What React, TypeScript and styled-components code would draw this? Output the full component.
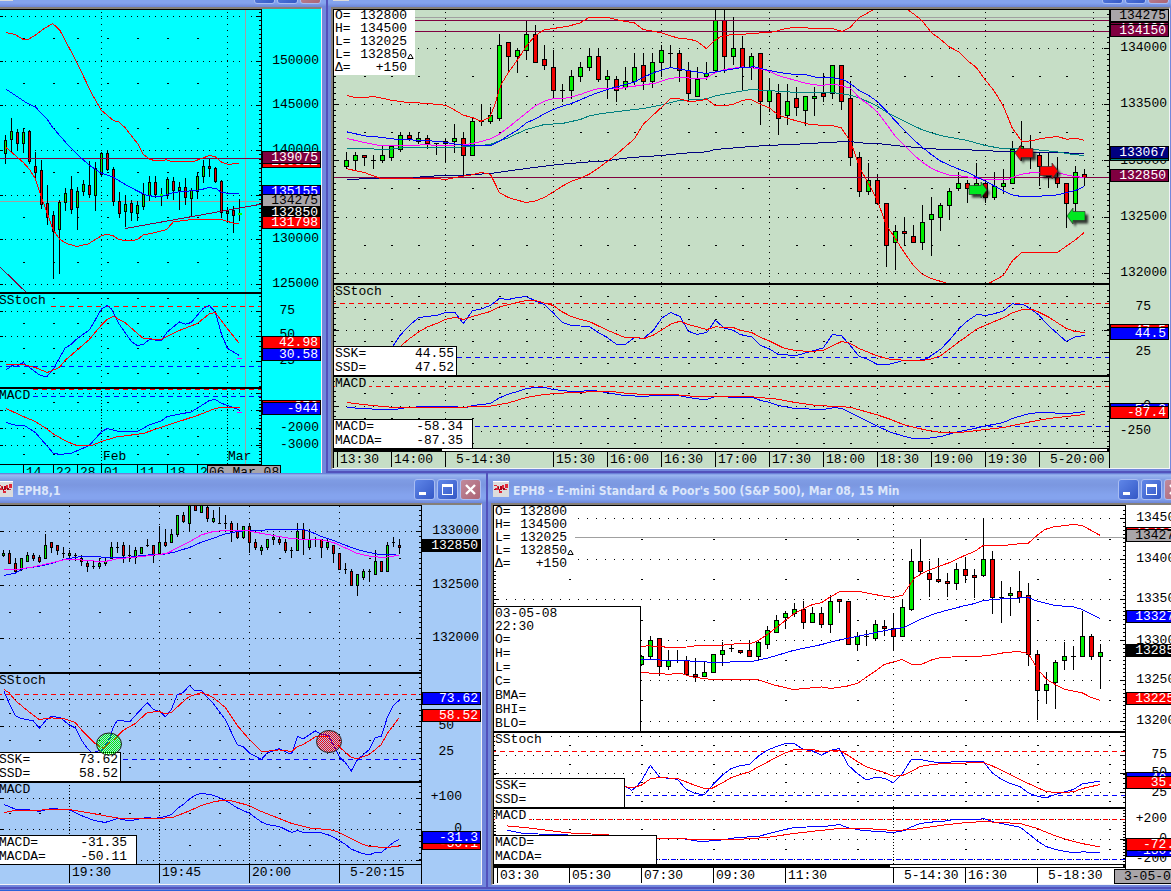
import React from "react";
import styled, { createGlobalStyle } from "styled-components";

/* ---------- page ---------- */

const GlobalStyle = createGlobalStyle`
  * { box-sizing: border-box; }
  html, body { margin: 0; padding: 0; background: #7b8fe0; }
  body { overflow: hidden; }
`;

const MONO = `"Liberation Mono", "DejaVu Sans Mono", monospace`;

const Desktop = styled.main`
  overflow: hidden;
  background: #7b8fe0;
  font: 13px/14px ${MONO};
  color: #000;
`;

const WindowRow = styled.div<{ $lower?: boolean }>`
  display: flex;
  align-items: flex-start;
  position: relative;
  margin-top: ${(p) => (p.$lower ? "-16px" : "-23px")};
`;

const Taskbar = styled.footer`
  height: 2px;
  background: #2a62d8;
`;

/* ---------- window chrome ---------- */

const Frame = styled.section<{ $width?: number; $overhang?: number }>`
  flex: ${(p) => (p.$width ? `0 0 ${p.$width}px` : "1 1 0")};
  min-width: 0;
  margin-left: ${(p) => (p.$width ? "-9px" : "0")};
  margin-right: ${(p) => (p.$overhang ? `-${p.$overhang}px` : "0")};
  padding: 0 5px 5px 4px;
  background: #7186dc;
  box-shadow: inset 0 -1px 0 #6a80da, inset 0 -3px 0 #5252bc, inset 1px 0 0 #5252bc, inset -1px 0 0 #5252bc;
`;

const TitleBar = styled.header`
  display: flex;
  align-items: flex-start;
  gap: 2px;
  height: 30px;
  margin: 0 -4px 0 -3px;
  padding: 6px 5px 0 5px;
  background: linear-gradient(#5b6fd0 0, #9bb8f0 2px, #7f9ce4 7px, #7b97e0 12px, #84a3ee 22px, #84a3ee 26px, #6d86d8 30px);
`;

const TitleText = styled.h2`
  flex: 1;
  min-width: 0;
  margin: 0;
  padding-left: 2px;
  font: bold 12px/24px "DejaVu Sans Condensed", "Open Sans", sans-serif;
  font-stretch: condensed;
  color: #dce6fa;
  white-space: nowrap;
  overflow: hidden;
`;

const ChromeButton = styled.button<{ $close?: boolean }>`
  flex: none;
  width: 21px;
  height: 21px;
  padding: 0;
  border: 1px solid #a9bdf2;
  border-radius: 3px;
  background: ${(p) => (p.$close ? "linear-gradient(135deg, #c08a9c, #ac6474)" : "linear-gradient(135deg, #5f86e8, #3458c6)")};

  svg { display: block; }
`;

const Body = styled.div<{ $tone: string }>`
  position: relative;
  display: flex;
  background: ${(p) => p.$tone};
  border-top: 2px solid #857f78;
  border-left: 2px solid #857f78;
  border-right: 1px solid #f4f4f8;
  border-bottom: 1px solid #f4f4f8;
`;

const Plot = styled.div`
  flex: 1;
  min-width: 0;
  border: solid #000;
  border-width: 1px 1px 0 1px;
`;

const Scale = styled.ol`
  position: relative;
  flex: 0 0 59px;
  margin: 0;
  padding: 0;
  list-style: none;
`;

const ScaleLabel = styled.li<{ $y: number; $inset: number }>`
  position: absolute;
  top: ${(p) => p.$y}px;
  right: ${(p) => p.$inset}px;
  line-height: 13px;
  white-space: nowrap;
`;

const ScaleTag = styled.li<{ $y: number; $tone: string; $ink: string }>`
  position: absolute;
  top: ${(p) => p.$y}px;
  left: 0;
  right: 0;
  height: 13px;
  padding-right: 2px;
  border: 1px solid #000;
  background: ${(p) => p.$tone};
  color: ${(p) => p.$ink};
  line-height: 12px;
  text-align: right;
  overflow: hidden;
`;

/* ---------- panes ---------- */

const PaneBox = styled.div<{ $height: number; $rule: number }>`
  position: relative;
  height: ${(p) => p.$height + p.$rule}px;
  border-bottom: ${(p) => p.$rule}px solid #000;
`;

const PaneSvg = styled.svg`
  display: block;
  width: 100%;
  height: 100%;
`;

const PaneName = styled.h3<{ $tone: string }>`
  position: absolute;
  top: 0;
  left: 1px;
  margin: 0;
  padding-right: 3px;
  background: ${(p) => p.$tone};
  font: inherit;
`;

const Readout = styled.dl<{ $width: number }>`
  position: absolute;
  left: 0;
  bottom: 0;
  width: ${(p) => p.$width}px;
  margin: 0;
  border: solid #000;
  border-width: 1px 1px 0 0;
  background: #fff;
`;

const ReadoutRow = styled.div<{ $inset?: number }>`
  display: flex;
  justify-content: space-between;
  height: 14px;
  padding: 0 ${(p) => p.$inset ?? 2}px 0 1px;

  dd { margin: 0; }
`;

const Stamp = styled.div`
  height: 13px;
  padding-left: 1px;
  line-height: 13px;
`;

const Quote = styled.dl`
  position: absolute;
  top: 0;
  left: 0;
  width: 81px;
  margin: 0;
  padding-left: 1px;
  background: #fff;
  line-height: 12px;
`;

const QuoteRow = styled.div`
  display: flex;
  height: 13px;

  dt { width: 24px; }
  dd { margin: 0; width: 48px; text-align: right; }
  svg { margin-top: 4px; }
`;

const MonthName = styled.span<{ $x: number }>`
  position: absolute;
  left: ${(p) => p.$x}px;
  bottom: 0;
`;

const ScrollTrack = styled.div<{ $start: number }>`
  height: 3px;
  padding: 0 2px 1px ${(p) => p.$start}px;
  background: #000;

  &::after { content: ""; display: block; height: 2px; background: #fff; }
`;

const TimeScale = styled.ol<{ $height: number; $lead: number }>`
  display: flex;
  height: ${(p) => p.$height}px;
  margin: 0;
  padding: 0 0 1px ${(p) => p.$lead}px;
  overflow: hidden;
  list-style: none;
  line-height: 15px;
`;

const TimeSlot = styled.li<{ $width: number; $day?: boolean }>`
  flex: 0 0 ${(p) => p.$width}px;
  padding-left: ${(p) => (p.$day ? 10 : 2)}px;
  border-left: 1px solid #000;
  white-space: nowrap;
`;

const DateTag = styled.div<{ $right: number; $width: number; $height: number; $pad: number }>`
  position: absolute;
  right: ${(p) => p.$right}px;
  bottom: 0;
  width: ${(p) => p.$width}px;
  height: ${(p) => p.$height}px;
  padding-left: ${(p) => p.$pad}px;
  border: 1px solid #000;
  background: #a9a5a9;
  white-space: nowrap;
  overflow: hidden;
`;

/* ---------- chart drawing: data is in thirds of a pixel ---------- */

type Segment = [number, string];
const px = (v: number) => Math.floor(v / 3);

const toPoints = (segments: Segment[]) =>
  segments
    .flatMap(([dx, s]) => s.trim().split(/\s+/).map((p) => p.split(",").map(Number)).map(([x, y]) => `${((x + dx) / 3).toFixed(1)},${(y / 3 + 0.2).toFixed(1)}`))
    .join(" ");

const Curve = ({ c, d }: { c: string; d: Segment[] | string }) => (
  <polyline points={toPoints(typeof d === "string" ? [[0, d]] : d)} fill="none" stroke={c} strokeWidth={1} />
);

const HLine = ({ y, c, dash, from = -90 }: { y: number; c: string; dash?: boolean; from?: number }) => (
  <line x1={px(from)} x2={4000} y1={px(y) + 0.5} y2={px(y) + 0.5} stroke={c} strokeDasharray={dash ? "5 4" : undefined} />
);

interface CandleProps { data: string; x: number; step: number; wide?: boolean }

const Candles = ({ data, x, step, wide }: CandleProps) => (
  <>
    {data.trim().split(/\s*;\s*/).filter(Boolean).map((row, i) => {
      const [hs, ts, bs, ls, kind] = row.trim().split(/[ ,]+/);
      const [h, t, b, l] = [hs, ts, bs, ls].map((v) => px(Number(v)));
      const cx = px(x + step * i);
      const r = wide ? 2 : 1;
      return (
        <g key={i}>
          <rect x={cx} y={h} width={1} height={Math.max(1, l - h)} fill="#000" />
          <rect x={cx - r} y={t} width={2 * r + 1} height={Math.max(1, b - t + 1)} fill="#000" />
          {kind !== "d" && b - t > 0 && (
            <rect x={cx - r + 1} y={t + 1} width={2 * r - 1} height={Math.max(1, b - t - 1)} fill={kind === "g" ? "#00f000" : "#f00000"} />
          )}
        </g>
      );
    })}
  </>
);

interface GridProps { rows: number[]; dashes: number[]; x: number; step: number; dashX: number[]; cols: number[]; vstep?: number; until: number }

const Grid = ({ rows, dashes, x, step, dashX, cols, vstep = 6, until }: GridProps) => (
  <g stroke="#000">
    {rows.map((y) => <line key={y} x1={px(x)} x2={px(until)} y1={px(y) + 0.5} y2={px(y) + 0.5} strokeDasharray={`1 ${step - 1}`} />)}
    {dashes.flatMap((y) => dashX.map((dx) => <line key={`${y}-${dx}`} x1={px(dx)} x2={px(dx) + 2} y1={px(y) + 0.5} y2={px(y) + 0.5} />))}
    {cols.map((cx) => <line key={cx} x1={px(cx) + 0.5} x2={px(cx) + 0.5} y1={0} y2={900} strokeDasharray={`1 ${vstep - 1}`} />)}
  </g>
);

interface PaneProps {
  height: number; rule?: number; x: number; y: number; tick: number; grid: GridProps;
  name?: string; tone?: string; overlay?: React.ReactNode; children?: React.ReactNode;
}

const Pane = ({ height, rule = 2, x, y, tick, grid, name, tone = "transparent", overlay, children }: PaneProps) => {
  const first = (px(grid.rows[0]) + y) % tick;
  const ticks = `1 ${tick - 1}`;
  return (
    <PaneBox $height={height} $rule={rule}>
      <PaneSvg shapeRendering="crispEdges" aria-hidden="true">
        <g stroke="#000" strokeWidth={4}>
          <line x1="0" x2="0" y1={first} y2={height} strokeDasharray={ticks} />
          <line x1="100%" x2="100%" y1={first} y2={height} strokeDasharray={ticks} />
          {grid.rows.map((r) => (
            <React.Fragment key={r}>
              <line strokeWidth={1} x1="0" x2="5" y1={px(r) + y + 0.5} y2={px(r) + y + 0.5} />
              <line strokeWidth={10} x1="100%" x2="100%" y1={px(r) + y} y2={px(r) + y + 1} />
            </React.Fragment>
          ))}
        </g>
        <g transform={`translate(${x} ${y})`}>
          <Grid {...grid} />
          {children}
        </g>
      </PaneSvg>
      {name && <PaneName $tone={tone}>{name}</PaneName>}
      {overlay}
    </PaneBox>
  );
};

/* ---------- small parts ---------- */

const IconSvg = styled.svg`
  flex: none;
  margin-top: 2px;
`;

const AppIcon = () => (
  <IconSvg width="16" height="16" viewBox="0 0 16 16" aria-hidden="true" shapeRendering="crispEdges">
    <rect width="16" height="16" fill="#dcdcdc" />
    <rect width="16" height="1" fill="#fff" />
    <path d="M1 4h3v1H1zM2 7h2v2H2zM4 5h2v4H4zM12 3h3v4h-3zM12 8h2v1h-2zM9 4h2v4H9zM6 10h3v2H6z" fill="#e02838" />
    <path d="M7 5h2v4H7zM6 8h1v2H6zM1 8h2v1H1zM11 7h1v2h-1z" fill="#b00018" />
    <path d="M5 6h1v2H5zM10 7h1v2h-1z" fill="#701018" />
  </IconSvg>
);

const ChromeButtons = () => (
  <>
    <ChromeButton type="button" aria-label="Minimize">
      <svg width="19" height="19" viewBox="0 0 19 19"><rect x="4" y="12" width="7" height="3" fill="#fff" /></svg>
    </ChromeButton>
    <ChromeButton type="button" aria-label="Maximize">
      <svg width="19" height="19" viewBox="0 0 19 19"><path d="M4 4h11v11H4zM5 7v7h9V7z" fill="#fff" fillRule="evenodd" /></svg>
    </ChromeButton>
    <ChromeButton type="button" aria-label="Close" $close>
      <svg width="19" height="19" viewBox="0 0 19 19"><path d="M5 5l9 9M14 5l-9 9" stroke="#fff" strokeWidth="2.4" /></svg>
    </ChromeButton>
  </>
);

const QuoteBoard = () => (
  <Quote>
    <QuoteRow><dt>O=</dt><dd>132800</dd></QuoteRow>
    <QuoteRow><dt>H=</dt><dd>134500</dd></QuoteRow>
    <QuoteRow><dt>L=</dt><dd>132025</dd></QuoteRow>
    <QuoteRow>
      <dt>L=</dt><dd>132850</dd>
      <svg width="7" height="7" viewBox="0 0 7 7" aria-hidden="true"><path d="M.8 5.5h5.4L3.5 1z" fill="none" stroke="#000" /></svg>
    </QuoteRow>
    <QuoteRow><dt>Δ=</dt><dd>+150</dd></QuoteRow>
  </Quote>
);

const Values = ({ width, inset, items }: { width: number; inset?: number; items: [string, string?][] }) => (
  <Readout $width={width}>
    {items.map(([k, v]) => <ReadoutRow key={k} $inset={inset}><dt>{k}</dt><dd>{v}</dd></ReadoutRow>)}
  </Readout>
);

interface Mark { y: number; t: string; inset?: number; tag?: string; ink?: string }

const PriceScale = ({ marks, top }: { marks: Mark[]; top: number }) => (
  <Scale>
    {marks.map((m) =>
      m.tag
        ? <ScaleTag key={m.t} $y={m.y - top - 6} $tone={m.tag} $ink={m.ink ?? "#fff"}>{m.t}</ScaleTag>
        : <ScaleLabel key={m.t} $y={m.y - top - 6} $inset={m.inset ?? 2}>{m.t}</ScaleLabel>
    )}
  </Scale>
);

interface ArrowProps { x: number; y: number; c: string; left?: boolean }

const Arrow = ({ x, y, c, left }: ArrowProps) => (
  <g transform={`translate(${x} ${y})${left ? " scale(-1 1)" : ""}`} shapeRendering="auto">
    <path d="M-9-4.5H3V-8l6 8-6 8V4.5H-9z" transform={left ? "translate(-3 3)" : "translate(3 3)"} fill="#000" opacity=".75" filter="url(#arrow-shade)" />
    <path d="M-9-4.5H3V-8l6 8-6 8V4.5H-9z" fill={c} stroke="#303030" strokeWidth=".7" />
  </g>
);

const span = (from: number, to: number, step: number, skip: number[] = []) => {
  const out: number[] = [];
  for (let v = from; v <= to; v += step) if (!skip.includes(v)) out.push(v);
  return out;
};

const RED = "#ff0000", BLUE = "#0000ff", PINK = "#ff00ff", TEAL = "#008080", NAVY = "#000080", MAROON = "#800040", GREY = "#a0a0a0";

/* ---------- daily window ---------- */

const DAILY = `406,421,460,493,g;354,394,418,457,g;388,397,430,452,r;385,397,430,460,g;390,394,485,492,r;457,499,517,536,r;481,511,613,629,r;556,610,652,677,r;633,646,695,839,r;601,607,688,824,g;
565,580,607,633,g;528,568,628,643,r;562,574,622,692,g;540,553,574,588,g;484,556,583,594,r;487,505,586,635,g;457,460,523,531,g;450,460,508,513,r;501,508,604,620,r;576,604,640,655,r;
585,613,634,683,g;600,610,637,664,r;604,616,640,665,g;550,583,619,630,g;529,547,586,605,g;528,547,583,594,r;565,583,586,620,g;533,538,586,597,g;531,544,570,600,r;547,562,571,632,g;
534,562,592,615,r;565,571,596,652,g;517,529,574,597,g;481,499,529,551,g;475,499,505,531,r;501,505,544,551,r;541,544,638,654,r;622,633,640,665,g;619,631,646,701,r;598,640,644,665,g`;

const DailyWindow = () => {
  const tone = "#00ffff";
  const g = { x: -2, step: 6, dashX: [70, 160, 232, 321, 411, 502, 591], cols: [304, 682], until: 780 };
  const cursor = <line x1={245.5} x2={245.5} y1={0} y2={470} stroke={GREY} />;
  return (
    <Frame $width={336}>
      <TitleBar><AppIcon /><TitleText /><ChromeButtons /></TitleBar>
      <Body $tone={tone}>
        <Plot>
          <Pane height={282} x={2} y={-10} tick={4.46} grid={{ ...g, rows: [49, 184, 316, 451, 586, 719, 853], dashes: [115, 250, 385, 517, 652, 787] }}>
            {cursor}
            <HLine y={604} c={GREY} />
            <Candles data={DAILY} x={16} step={18} />
            <HLine y={475} c={MAROON} />
            <Curve c={MAROON} d="376,685 783,612" />
            <Curve c={MAROON} d="0,800 77,875" />
            <Curve c={RED} d="18,97 45,103 70,118 85,117 106,105 130,87 158,70 180,91 214,155 250,227 275,280 304,330 340,361 358,366 376,383 414,432 430,462 450,478 465,481 500,479 520,485 580,484 605,475 628,466 645,469 665,486 685,493 718,489" />
            <Curve c={BLUE} d="18,267 80,308 106,320 142,358 160,384 200,430 232,463 268,495 300,517 340,531 376,553 412,572 440,586 480,590 520,577 600,569 628,562 650,566 664,576 685,580 718,580" />
            <Curve c={RED} d="18,442 45,465 70,487 88,507 106,535 124,590 142,640 160,690 180,718 200,730 230,739 265,731 304,707 320,702 340,707 358,719 400,721 414,717 430,704 470,696 500,688 520,665 575,658 665,658 700,669 718,671" />
            <rect x={238} y={213} width={4} height={2} fill="#00ff00" />
            <rect x={160} y={194} width={3} height={2} fill="#00ff00" />
          </Pane>
          <Pane height={93} x={2} y={-14} tick={5} name="SStoch" tone={tone} grid={{ ...g, rows: [94, 169, 244], dashes: [55, 130, 206, 280] }}>
            {cursor}
            <HLine y={79} c={RED} dash />
            <HLine y={259} c={BLUE} dash />
            <Curve c={BLUE} d="18,269 35,257 50,258 70,247 88,262 120,285 140,290 160,266 195,204 214,192 232,175 268,149 286,119 304,87 322,76 335,87 358,132 394,184 412,196 430,193 448,178 484,181 502,155 538,125 556,132 574,127 592,105 610,84 628,76 646,96 664,160 682,204 718,226" />
            <Curve c={RED} d="18,253 70,253 106,262 142,277 178,262 196,240 232,209 268,178 304,135 322,117 340,108 376,128 430,175 484,178 538,151 592,130 628,101 646,97 682,145 718,190" />
            <Curve c={PINK} d="711,235 726,235" />
          </Pane>
          <Pane height={75} rule={1} x={2} y={-109} tick={3.6} name="MACD" tone={tone}
            grid={{ ...g, vstep: 3, rows: [340, 391, 445, 497], dashes: [367, 470, 523] }}
            overlay={<><MonthName $x={105}>Feb</MonthName><MonthName $x={230}>Mar</MonthName></>}>
            {cursor}
            <HLine y={328} c={RED} dash />
            <HLine y={349} c={BLUE} dash />
            <Curve c={BLUE} d="18,427 50,436 75,437 106,457 160,519 180,523 214,519 268,496 304,455 322,445 360,455 412,454 448,434 484,422 502,409 574,395 592,384 628,361 646,358 664,369 700,382 718,390" />
            <Curve c={RED} d="18,385 70,409 106,424 142,447 160,461 200,484 230,496 275,496 304,484 350,470 430,460 484,441 592,406 640,387 660,382 720,382" />
            <Curve c={PINK} d="711,397 726,397" />
          </Pane>
          <TimeScale $height={18} $lead={25}>
            <TimeSlot $width={30}>14</TimeSlot><TimeSlot $width={24}>22</TimeSlot><TimeSlot $width={24}>28</TimeSlot>
            <TimeSlot $width={36}>01</TimeSlot><TimeSlot $width={30}>11</TimeSlot><TimeSlot $width={30}>18</TimeSlot><TimeSlot $width={30}>26</TimeSlot>
          </TimeScale>
        </Plot>
        <PriceScale top={9} marks={[
          { y: 60, t: "150000" }, { y: 104, t: "145000" }, { y: 149, t: "140000" }, { y: 238, t: "130000" }, { y: 283, t: "125000" },
          { y: 310, t: "75", inset: 26 }, { y: 334, t: "50", inset: 26 }, { y: 360, t: "25", inset: 26 },
          { y: 427, t: "-2000" }, { y: 444, t: "-3000" },
          { y: 161, t: "138812", tag: RED }, { y: 157, t: "139075", tag: MAROON },
          { y: 191, t: "135155", tag: BLUE }, { y: 212, t: "132850", tag: "#000" }, { y: 200, t: "134275", tag: "#a9a5a9", ink: "#000" },
          { y: 222, t: "131798", tag: RED }, { y: 342, t: "42.98", tag: RED }, { y: 354, t: "30.58", tag: BLUE },
          { y: 406, t: "-876", tag: RED }, { y: 408, t: "-944", tag: BLUE },
        ]} />
        <DateTag $right={40} $width={74} $height={18} $pad={1}>06 Mar 08</DateTag>
      </Body>
    </Frame>
  );
};

/* ---------- three-minute window ---------- */

const THREE_MIN = `457,482,500,509,g;458,466,482,510,g;465,465,473,500,r;466,481,481,509,d;438,466,482,491,g;436,439,473,483,g;397,406,448,458,g;396,406,415,424,r;397,415,424,432,g;406,415,430,449,r;
430,430,430,467,d;416,424,431,491,g;372,415,425,459,g;396,415,466,525,r;352,364,466,466,g;313,364,364,380,d;322,346,365,374,g;102,136,355,365,g;128,128,170,213,r;145,152,170,221,g;
63,103,152,180,g;76,103,187,187,r;136,178,197,212,r;151,203,271,297,r;253,271,271,306,d;211,229,271,297,g;187,203,229,246,g;145,170,203,213,g;145,170,238,246,r;211,230,238,297,g;
230,238,271,306,r;202,244,263,272,g;159,203,244,256,g;160,196,244,272,r;160,187,244,264,g;136,151,187,231,g;136,160,160,204,d;151,160,211,246,r;187,211,280,304,r;202,238,290,290,g;
187,220,230,240,g;28,62,212,221,g;28,62,170,221,r;52,145,170,197,g;109,145,203,273,r;160,170,203,240,g;160,160,304,375,r;238,271,304,338,g;253,280,355,407,r;253,304,347,375,g;
262,295,323,348,r;290,290,331,380,g;262,289,295,348,g;220,280,290,306,r;196,196,280,297,g;196,196,304,332,r;244,295,472,500,r;457,472,574,593,r;490,541,574,585,g;523,541,610,617,r;
610,610,736,803,r;676,694,727,812,g;652,694,700,738,r;676,709,727,727,r;616,667,727,752,g;592,643,658,770,g;610,616,652,695,g;565,574,616,660,g;517,550,566,575,g;541,550,566,611,r;
490,550,556,585,g;541,550,592,609,r;517,559,592,602,g;508,550,559,584,g;424,448,550,550,g;364,440,448,480,g;406,450,470,509,r;457,466,500,560,r;457,510,530,565,r;472,532,550,565,r;
550,550,610,686,r;499,517,610,650,g;508,523,532,560,r`;

const ThreeMinuteWindow = () => {
  const tone = "#c6dec6";
  const cols = span(361, 2400, 324);
  const g = { x: 64, step: 9, dashX: span(118, 2305, 81, cols), cols, until: 2340 };
  return (
    <Frame $overhang={4}>
      <TitleBar><AppIcon /><TitleText /><ChromeButtons /></TitleBar>
      <Body $tone={tone}>
        <Plot>
          <Pane height={273} x={-9} y={-10} tick={5.62} overlay={<QuoteBoard />} grid={{ ...g, rows: [145, 313, 481, 652, 820], dashes: [229, 397, 565, 736] }}>
            <defs><filter id="arrow-shade" x="-50%" y="-50%" width="200%" height="200%"><feGaussianBlur stdDeviation="1.3" /></filter></defs>
            <HLine y={52} c={GREY} />
            <Candles data={THREE_MIN} x={64} step={27} wide />
            <HLine y={61} c={MAROON} />
            <HLine y={94} c={MAROON} />
            <HLine y={532} c={MAROON} />
            <Curve c={NAVY} d={[[0, "66,538 160,534 260,534 300,528 400,526 496,520 604,505 700,493 793,485"], [825, "0,484 94,472 184,466 250,459 319,455 346,448 427,441 500,436 590,432 697,426 751,424"], [1605, "0,428 52,430 135,439 214,446 330,449 430,454 550,456 673,460"]]} />
            <Curve c={TEAL} d={[[0, "66,445 135,445 160,448 210,446 240,441 400,441 440,438 496,433 523,422 550,413 577,400 604,388 658,373 712,370 766,358 793,347 830,340"], [825, "60,333 130,325 184,314 238,301 319,296 346,287 400,277 454,268 500,271 580,276 700,277 751,285"], [1605, "10,298 52,318 80,336 133,363 187,389 241,406 322,421 376,436 425,445 484,446 535,449 592,455 640,463 673,466"]]} />
            <Curve c={PINK} d={[[0, "66,415 118,427 165,436 220,436 300,434 345,435 415,434 442,430 468,424 496,416 523,402 550,382 577,360 604,338 631,317 658,303 685,295 712,296 739,290 766,283 793,273 820,265 885,265"], [825, "75,262 130,254 165,249 184,243 211,234 250,232 300,236 319,234 346,217 373,208 430,200 481,206 508,213 535,226 562,234 589,241 616,249 660,256 697,252 724,256 751,264"], [1605, "0,295 25,312 52,335 79,371 106,408 133,436 160,463 187,486 214,504 241,516 268,525 310,528 349,535 400,539 440,539 457,532 484,522 511,518 560,517 592,517 620,524 650,530 673,531"]]} />
            <Curve c={BLUE} d={[[0, "66,395 120,407 165,411 220,418 280,420 345,424 400,433 440,437 494,437 523,424 550,406 577,390 604,368 631,356 658,341 685,328 712,318 739,310 766,299 793,287 820,277 850,267"], [825, "60,257 103,246 130,231 165,216 184,210 211,202 265,211 319,220 373,211 430,201 465,200 508,211 562,221 616,223 650,232 700,233 735,240 760,257"], [1605, "0,273 25,285 52,304 79,332 106,362 133,390 160,418 187,441 214,463 241,482 268,495 295,506 322,516 349,530 376,543 403,557 430,572 457,584 484,589 525,589 592,584 620,577 646,571 673,559"]]} />
            <Curve c={RED} d={[[0, "66,286 90,292 118,292 145,289 172,294 199,300 240,306 295,309 330,312 361,315 390,330 415,345 442,352 468,363 494,352 510,312 522,270 530,250 550,217 577,180 604,138 631,106 658,89 685,85 730,78 765,68 790,53 855,53"], [825, "57,60 103,68 130,88 180,97 238,115 270,117 292,124 319,145 340,124 360,110 390,104 430,102 480,98 520,95 550,87 580,82 640,84 700,86 727,94 750,82 778,52 818,30 826,24"]]} />
            <Curve c={RED} d={[[1605, "135,22 142,28 162,42 187,62 214,97 241,117 268,140 295,154 322,181 349,202 376,239 403,273 430,317 457,384 486,424 511,422 550,414 592,409 620,417 650,414 673,421"]]} />
            <Curve c={RED} d={[[0, "66,506 90,511 118,517 145,527 165,534 220,535 345,536 361,538 400,530 440,524 468,517 496,522 510,550 523,577 550,592 577,600 604,607 631,602 658,592 685,575 712,558 739,543 766,534 793,522 820,504"], [825, "50,462 103,416 130,372 184,322 211,295 238,296 265,303 300,302 319,296 346,316 375,317 400,312 430,300 454,298 481,312 508,323 535,344 562,354 590,362 630,373 700,377 724,383 751,423 770,475"], [1605, "0,505 20,540 52,600 79,675 106,715 133,757 160,796 187,822 214,835 260,849"]]} />
            <Curve c={RED} d={[[1605, "388,849 430,826 457,782 484,758 592,757 620,737 646,719 673,697"]]} />
            <Arrow x={699} y={153} c="#ff0000" left />
            <Arrow x={724} y={171} c="#ff0000" />
            <Arrow x={653} y={190} c="#00e820" />
            <Arrow x={751} y={216} c="#00e820" left />
          </Pane>
          <Pane height={90} x={-9} y={-5} tick={5.6} name="SStoch" tone={tone}
            grid={{ ...g, rows: [82, 151, 217], dashes: [49, 118, 184, 250] }}
            overlay={<Values width={123} items={[["SSK=", "44.55"], ["SSD=", "47.52"]]} />}>
            <HLine y={70} c={RED} dash />
            <HLine y={232} c={BLUE} dash />
            <Curve c={BLUE} d={[[0, "205,196 226,165 253,136 280,113 300,109 335,106 361,97 390,97 415,130 442,92 469,86 496,76 523,55 550,58 577,52 604,49 631,62 658,73 685,98 712,127 739,136 793,139 820,157 847,172 875,193 901,193 928,172 955,175 985,151 1010,114 1037,97 1065,109 1090,153 1117,163 1146,156 1171,120 1198,144 1225,150"], [1245, "0,163 35,170 62,196 88,206 115,223 170,226 197,218 250,203 277,163 305,167 330,195 357,228 385,238 412,253 445,253 490,241 530,242 560,235 603,206 630,178 657,145 684,121 711,103 738,106 765,100 790,92 817,71 850,73 870,85 895,103 925,136 950,158 979,184 1005,170 1034,166"]]} />
            <Curve c={RED} d={[[0, "229,196 250,178 280,156 307,140 335,130 361,118 390,111 415,118 442,109 496,94 523,80 577,67 604,61 635,62 685,76 712,95 739,109 766,118 793,124 847,150 900,172 960,174 985,165 1010,149 1037,132 1065,123 1090,133 1146,148 1171,140 1225,142"], [1245, "0,150 35,157 62,172 88,182 130,203 170,212 220,213 250,211 277,197 305,184 330,189 357,205 412,227 450,237 490,240 545,241 575,236 603,226 657,185 711,146 765,123 790,113 817,98 845,89 880,89 895,95 925,110 979,145 1005,154 1034,157"]]} />
          </Pane>
          <Pane height={71} rule={1} x={-9} y={-97} tick={5} name="MACD" tone={tone}
            grid={{ ...g, rows: [304, 379, 454], dashes: [340, 415, 490] }}
            overlay={<Values width={139} inset={9} items={[["MACD=", "-58.34"], ["MACDA=", "-87.35"]]} />}>
            <HLine y={319} c={RED} dash />
            <HLine y={439} c={BLUE} dash />
            <Curve c={BLUE} d={[[0, "66,382 115,385 165,388 210,388 250,381 330,379 385,379 420,383 442,376 496,370 523,353 550,342 577,334 604,325 631,322 658,322 685,328 730,333 766,333 805,331 850,338 890,345 955,349 1000,345 1060,346 1090,352 1140,359 1171,349"], [1245, "0,352 40,352 62,361 90,367 115,376 165,385 250,388 285,382 305,385 357,410 412,438 450,455 490,468 520,475 560,475 603,469 640,458 711,443 738,437 790,427 817,415 860,402 895,397 940,398 980,401 1034,394"]]} />
            <Curve c={RED} d={[[0, "66,367 140,376 210,382 350,382 442,380 496,378 550,368 604,352 650,344 700,339 760,337 790,335 860,334 910,340 985,344 1060,344 1110,349"], [1245, "0,350 40,350 115,357 165,367 230,376 330,381 412,404 450,417 490,433 530,443 560,450 603,457 660,457 711,451 790,442 870,425 925,415 979,409 1034,403"]]} />
          </Pane>
          <ScrollTrack $start={108} />
          <TimeScale $height={16} $lead={3}>
            {["13:30", "14:00", "5-14:30", "15:30", "16:00", "16:30", "17:00", "17:30", "18:00", "18:30", "19:00", "19:30", "5-20:00"].map((t) => (
              <TimeSlot key={t} $width={t === "5-14:30" ? 108 : 54} $day={t.length > 5}>{t}</TimeSlot>
            ))}
          </TimeScale>
        </Plot>
        <PriceScale top={9} marks={[
          { y: 47, t: "134000" }, { y: 103, t: "133500" }, { y: 160, t: "133000" }, { y: 216, t: "132500" }, { y: 272, t: "132000" },
          { y: 306, t: "75", inset: 18 }, { y: 351, t: "25", inset: 18 }, { y: 405, t: "0", inset: 18 }, { y: 430, t: "-250", inset: 18 },
          { y: 28, t: "134200", tag: MAROON }, { y: 30, t: "134150", tag: MAROON }, { y: 15, t: "134275", tag: "#a9a5a9", ink: "#000" },
          { y: 154, t: "133040", tag: TEAL }, { y: 152, t: "133067", tag: NAVY }, { y: 175, t: "132850", tag: MAROON },
          { y: 330, t: "47.5", tag: RED }, { y: 333, t: "44.5", tag: BLUE },
          { y: 409, t: "-58.3", tag: BLUE }, { y: 412, t: "-87.4", tag: RED },
        ]} />
      </Body>
    </Frame>
  );
};

/* ---------- one-minute window ---------- */

const ONE_MIN = `240,250,255,262,g;241,250,280,282,r;264,280,304,305,r;264,265,299,305,g;247,256,274,276,g;249,256,265,274,r;255,262,274,281,r;193,226,265,266,g;217,217,233,251,r;225,225,241,257,r;
232,250,250,265,d;241,250,256,265,g;250,257,257,274,d;256,265,274,290,r;274,280,289,306,r;275,289,289,298,d;265,280,290,298,g;265,274,280,290,g;217,232,265,266,g;217,232,232,250,d;
217,226,256,281,r;226,256,256,276,d;232,241,262,282,g;232,232,250,252,g;208,226,226,232,d;226,226,255,281,r;169,217,250,250,g;178,217,226,232,r;178,193,217,218,g;136,137,193,201,g;
127,137,154,161,r;95,95,160,184,g;95,95,120,124,r;95,95,128,130,g;100,112,145,158,r;120,145,153,160,g;113,160,160,163,d;136,160,160,178,d;154,160,184,217,r;160,184,203,209,r;
169,169,203,208,g;160,169,217,250,r;208,217,233,241,r;225,232,241,257,g;207,208,233,241,g;192,202,208,226,g;202,208,217,226,r;208,217,241,250,r;232,241,241,266,d;160,184,241,243,g;
160,178,205,257,r;178,208,233,240,g;202,208,208,232,d;208,208,233,266,r;208,217,233,241,g;226,226,250,281,r;250,250,298,299,r;280,298,298,313,d;298,304,346,347,r;313,313,346,378,g;
298,304,323,330,g;298,304,304,338,d;240,274,313,315,g;274,274,304,305,r;217,226,304,305,g;202,217,217,232,d;208,226,232,252,r`;

const Disc = ({ x, y, c, id }: { x: number; y: number; c: string; id: string }) => (
  <>
    <defs>
      <pattern id={id} width="2" height="2" patternUnits="userSpaceOnUse">
        <rect width="1" height="1" fill={c} /><rect x="1" y="1" width="1" height="1" fill={c} />
      </pattern>
    </defs>
    <ellipse cx={x} cy={y} rx="12.5" ry="11" fill={`url(#${id})`} stroke="#202020" shapeRendering="auto" />
  </>
);

const FloatingDisc = styled.svg`
  position: absolute;
  left: 97px;
  bottom: 25px;
`;

const OneMinuteWindow = () => {
  const tone = "#a6cbf7";
  const cols = [208, 478, 748, 1018];
  const g = { x: -8, step: 6, dashX: span(28, 1200, 90, cols), cols, until: 1255 };
  return (
    <Frame $width={496}>
      <TitleBar><AppIcon /><TitleText>EPH8,1</TitleText><ChromeButtons /></TitleBar>
      <Body $tone={tone}>
        <Plot>
          <Pane height={166} x={2} y={-36} tick={5.35} grid={{ ...g, rows: [184, 346, 505], dashes: [265, 427, 586] }}>
            <Candles data={ONE_MIN} x={10} step={18} />
            <Curve c={BLUE} d="12,316 46,309 70,295 118,288 154,280 190,268 235,260 300,260 330,263 390,261 430,255 485,253 520,247 568,232 604,216 640,204 676,191 712,184 750,181 790,181 800,178 910,178 935,186 964,199 1000,211 1036,225 1072,238 1108,247 1140,253 1180,253 1198,256" />
            <Curve c={PINK} d="12,298 50,298 100,290 154,278 200,267 240,268 260,272 320,273 350,266 440,257 500,250 532,233 568,215 604,194 640,184 676,181 748,182 770,187 820,196 880,206 960,208 1000,217 1036,233 1072,250 1110,258 1150,262 1198,255" />
          </Pane>
          <Pane height={107} x={2} y={-204} tick={5.4} name="SStoch" tone={tone}
            grid={{ ...g, rows: [688, 769, 850], dashes: [646, 730, 811, 892] }}
            overlay={<>
              <Values width={123} items={[["SSK=", "73.62"], ["SSD=", "58.52"]]} />
              <FloatingDisc width="28" height="24" viewBox="95 732 28 24" shapeRendering="crispEdges" aria-hidden="true"><Disc x={109} y={744} c="#00ff00" id="hatch-green" /></FloatingDisc>
            </>}>
            <HLine y={673} c={RED} dash />
            <HLine y={868} c={BLUE} dash />
            <Curve c={BLUE} d="12,664 28,700 46,736 64,745 100,752 118,774 140,748 154,739 180,742 208,764 226,773 244,809 262,835 275,848 310,838 331,800 340,770 352,751 390,754 406,736 442,697 460,718 480,724 496,740 514,718 532,673 550,667 568,646 586,662 604,660 622,682 640,700 676,748 712,824 730,830 748,848 784,868 802,848 838,835 862,848 875,850 893,799 910,806 946,782 965,793 985,795 1003,830 1018,860 1036,877 1054,902 1072,869 1108,838 1126,802 1144,799 1162,742 1180,706 1198,690" />
            <Curve c={RED} d="12,658 28,668 46,691 82,721 118,748 154,743 190,745 226,757 250,785 285,820 310,834 345,805 370,780 406,760 442,727 478,724 496,731 514,727 550,694 568,679 604,667 640,682 676,712 712,766 748,808 784,843 802,843 838,839 875,844 892,829 910,823 946,800 985,799 1018,830 1054,862 1072,865 1108,853 1144,823 1162,790 1198,742" />
            <Disc x={329} y={271.5} c="#ff0000" id="hatch-red" />
          </Pane>
          <Pane height={81} rule={1} x={2} y={-313} tick={6.1} name="MACD" tone={tone}
            grid={{ ...g, vstep: 3, rows: [986, 1079, 1170], dashes: [1030, 1125] }}
            overlay={<Values width={139} inset={9} items={[["MACD=", "-31.35"], ["MACDA=", "-50.11"]]} />}>
            <Curve c={BLUE} d="12,1003 46,1017 100,1020 118,1024 154,1015 208,1019 244,1036 280,1050 315,1057 352,1045 390,1052 440,1042 465,1045 496,1039 514,1033 532,1015 550,1003 568,987 586,975 604,969 640,975 676,990 712,1013 748,1029 784,1055 802,1063 838,1069 875,1087 892,1081 910,1087 964,1088 985,1094 1000,1101 1036,1122 1054,1137 1085,1149 1108,1154 1126,1147 1144,1147 1162,1132 1180,1117 1198,1107" />
            <Curve c={RED} d="12,1027 46,1021 208,1018 262,1027 334,1040 370,1046 478,1045 520,1041 568,1022 604,1006 640,995 670,990 694,992 748,1006 784,1024 838,1045 875,1060 928,1073 1000,1080 1018,1087 1054,1105 1090,1123 1108,1129 1162,1132 1198,1127" />
          </Pane>
          <TimeScale $height={19} $lead={71}>
            <TimeSlot $width={90}>19:30</TimeSlot><TimeSlot $width={90}>19:45</TimeSlot><TimeSlot $width={90}>20:00</TimeSlot><TimeSlot $width={80} $day>5-20:15</TimeSlot>
          </TimeScale>
        </Plot>
        <PriceScale top={505} marks={[
          { y: 530, t: "133000" }, { y: 584, t: "132500" }, { y: 637, t: "132000" },
          { y: 725, t: "50", inset: 27 }, { y: 751, t: "25", inset: 27 }, { y: 796, t: "+100", inset: 19 }, { y: 828, t: "0", inset: 19 },
          { y: 545, t: "132850", tag: "#000" }, { y: 698, t: "73.62", tag: BLUE }, { y: 715, t: "58.52", tag: RED },
          { y: 843, t: "-50.1", tag: RED }, { y: 837, t: "-31.3", tag: BLUE },
        ]} />
      </Body>
    </Frame>
  );
};

/* ---------- fifteen-minute window ---------- */

const FIFTEEN_MIN = `556,559,583,590,g;499,511,559,568,g;505,505,589,620,r;541,571,589,602,g;541,571,571,580,d;558,571,613,616,r;565,613,619,638,r;577,607,619,620,g;552,553,607,608,g;516,541,553,590,g;
522,535,535,548,d;540,541,547,554,r;514,541,559,560,r;511,517,559,572,g;468,481,523,537,g;435,451,487,489,g;424,430,443,477,g;400,418,430,443,g;393,418,457,477,r;412,430,457,459,g;
411,430,463,476,r;375,394,463,489,g;388,388,394,431,r;394,394,523,524,r;486,499,523,543,g;481,499,499,530,d;451,463,506,512,g;451,469,475,500,r;430,475,499,543,r;387,412,499,500,g;
237,274,418,425,g;208,274,304,317,r;273,310,328,383,r;266,328,334,341,r;310,334,340,383,r;279,298,340,360,g;262,298,317,341,r;297,316,322,384,r;144,268,317,323,g;243,268,383,432,r;
333,383,383,459,d;351,370,376,438,g;303,364,382,401,r;339,376,553,590,r;541,553,661,750,r;606,643,661,704,g;571,577,637,717,g;516,559,571,602,g;528,559,559,602,d;424,499,559,560,g;
492,499,559,572,r;522,547,559,657,g`;

const FifteenMinuteWindow = () => {
  const g = { x: 64, step: 9, dashX: [253, 469, 685, 901, 1117, 1441, 1657, 1872], cols: [1225], until: 1890 };
  return (
    <Frame $overhang={20}>
      <TitleBar><AppIcon /><TitleText>EPH8 - E-mini Standard &amp; Poor's 500 (S&amp;P 500), Mar 08, 15 Min</TitleText><ChromeButtons /></TitleBar>
      <Body $tone="#ffffff">
        <Plot>
          <Pane height={225} x={-9} y={-36} tick={4.06}
            grid={{ ...g, rows: [145, 268, 388, 511, 631, 754], dashes: [208, 328, 451, 571, 691] }}
            overlay={<>
              <QuoteBoard />
              <Readout $width={147}>
                <Stamp>03-05-08</Stamp><Stamp>22:30</Stamp>
                {["O=", "H=", "L=", "C=", "BMA=", "BHI=", "BLO="].map((k) => <ReadoutRow key={k}><dt>{k}</dt></ReadoutRow>)}
              </Readout>
            </>}>
            <HLine y={202} c={GREY} />
            <Candles data={FIFTEEN_MIN} x={469} step={27} wide />
            <Curve c={RED} d="469,529 485,527 520,528 550,532 600,531 640,526 713,525 750,521 800,519 820,511 847,493 874,472 901,451 928,430 955,416 980,404 1010,397 1036,380 1063,365 1130,365 1185,376 1225,382 1253,375 1270,350 1290,322 1320,305 1365,287 1395,277 1441,255 1470,243 1495,226 1565,226 1575,223 1630,219 1657,195 1680,178 1705,170 1765,163 1792,166 1846,196" />
            <Curve c={BLUE} d="469,568 510,569 590,571 690,577 805,573 850,563 925,541 1005,524 1060,510 1145,493 1200,481 1260,471 1305,448 1350,430 1395,418 1441,406 1470,400 1495,391 1550,386 1630,382 1657,393 1710,406 1765,410 1792,418 1846,445" />
            <Curve c={RED} d="469,607 550,612 590,610 620,620 680,628 820,629 870,645 925,658 1010,650 1036,655 1090,647 1120,638 1145,620 1171,603 1198,583 1225,575 1252,568 1280,583 1310,582 1340,569 1370,561 1480,559 1530,553 1560,547 1600,544 1630,550 1657,595 1684,627 1711,643 1738,657 1792,668 1819,682 1846,691" />
          </Pane>
          <Pane height={74} x={-9} y={-263} tick={4.7} name="SStoch" tone="#fff"
            grid={{ ...g, rows: [799, 856, 910, 967], dashes: [826, 883, 937, 994] }}
            overlay={<Values width={131} items={[["SSK="], ["SSD="]]} />}>
            <HLine y={844} c={RED} dash />
            <HLine y={976} c={BLUE} dash />
            <Curve c={BLUE} d={[[0, "420,948 440,960 452,952 469,932 496,885 523,920 550,925 577,927 604,958 631,970 658,974 685,942 712,915"], [705, "34,895 61,886 88,883 115,858 142,840 169,829 196,820 223,820 250,838 277,842 304,855 331,841 358,835 385,885 412,910 439,929 466,922 493,924 520,938 547,910 574,868 601,868 640,875"], [1365, "0,878 50,874 130,874 157,908 184,927 211,940 240,949 265,968 292,978 318,983 346,973 400,958 427,941 481,932"]]} />
            <Curve c={RED} d={[[0, "420,949 440,953 469,945 496,926 523,922 577,925 604,935 631,946 658,955 680,955 712,938 739,922"], [705, "61,913 88,905 115,890 142,876 169,861 196,848 223,838 277,838 304,844 358,841 385,856 412,874 439,890 493,907 520,918 547,916 574,904 601,889 640,882 690,880"], [1365, "130,877 157,887 211,913 265,940 318,964 346,967 400,965 427,955 481,943"]]} />
          </Pane>
          <Pane height={55} rule={1} x={-9} y={-339} tick={3} name="MACD" tone="#fff"
            grid={{ ...g, vstep: 3, rows: [1048, 1108, 1168], dashes: [1078, 1138] }}
            overlay={<Values width={163} items={[["MACD="], ["MACDA="]]} />}>
            <HLine y={1048} c={RED} dash />
            <HLine y={1168} c={BLUE} dash />
            <Curve c={BLUE} d={[[0, "66,1080 115,1090 240,1094 515,1105 590,1105 640,1113 690,1112 740,1105"], [705, "50,1102 115,1099 142,1091 196,1078 223,1072 320,1068 358,1063 385,1073 430,1081 520,1087 555,1081 574,1070 601,1060 650,1054"], [1365, "0,1055 40,1048 115,1048 130,1045 160,1055 184,1060 240,1071 265,1090 292,1112 318,1129 346,1138 400,1148 427,1145 481,1147"]]} />
            <Curve c={RED} d={[[0, "66,1067 130,1073 250,1088 350,1093 515,1105 600,1106 640,1108"], [705, "50,1108 142,1102 220,1090 300,1081 358,1075 440,1075 520,1081 580,1078 640,1069"], [1365, "0,1066 70,1058 130,1054 180,1057 240,1060 292,1075 346,1097 400,1114 440,1123 481,1130"]]} />
          </Pane>
          <ScrollTrack $start={396} />
          <TimeScale $height={16} $lead={3}>
            {["03:30", "05:30", "07:30", "09:30", "11:30", "5-14:30", "16:30", "5-18:30"].map((t) => (
              <TimeSlot key={t} $width={t === "11:30" ? 108 : 72} $day={t.length > 5}>{t}</TimeSlot>
            ))}
          </TimeScale>
        </Plot>
        <PriceScale top={505} marks={[
          { y: 517, t: "134500" }, { y: 558, t: "134000" }, { y: 598, t: "133500" }, { y: 640, t: "133000" }, { y: 679, t: "132500" }, { y: 720, t: "132000" },
          { y: 754, t: "75", inset: 18 }, { y: 772, t: "50", inset: 18 }, { y: 792, t: "25", inset: 18 },
          { y: 818, t: "+200", inset: 18 }, { y: 838, t: "0", inset: 18 }, { y: 858, t: "-200", inset: 18 },
          { y: 533, t: "134290", tag: RED }, { y: 535, t: "134275", tag: "#a9a5a9", ink: "#000" }, { y: 616, t: "133273", tag: BLUE }, { y: 650, t: "132850", tag: "#000" },
          { y: 698, t: "132254", tag: RED }, { y: 778, t: "40.1", tag: BLUE }, { y: 782, t: "35.4", tag: RED },
          { y: 850, t: "-130.5", tag: BLUE }, { y: 844, t: "-72.1", tag: RED },
        ]} />
        <DateTag $right={0} $width={71} $height={15} $pad={9}>3-05-08</DateTag>
      </Body>
    </Frame>
  );
};

export default function App() {
  return (
    <>
      <GlobalStyle />
      <Desktop>
        <WindowRow>
          <DailyWindow />
          <ThreeMinuteWindow />
        </WindowRow>
        <WindowRow $lower>
          <OneMinuteWindow />
          <FifteenMinuteWindow />
        </WindowRow>
        <Taskbar />
      </Desktop>
    </>
  );
}
